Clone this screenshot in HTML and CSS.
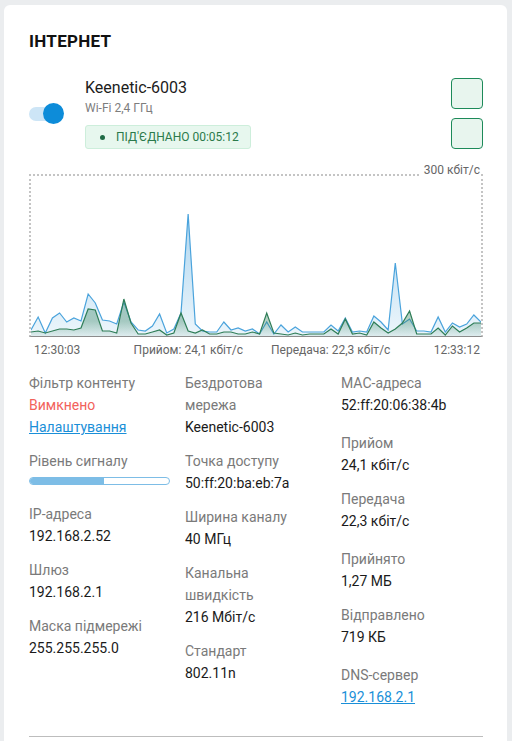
FILE: index.html
```html
<!DOCTYPE html>
<html lang="uk">
<head>
    <meta charset="UTF-8">
    <meta name="viewport" content="width=device-width, initial-scale=1.0">
    <title>Інтернет</title>
    <link rel="stylesheet" href="styles.css">
</head>
<body>
    <div class="card">
        <h2 class="card-title">Інтернет</h2>

        <!-- Connection row -->
        <div class="connection">
            <div class="toggle">
                <span class="toggle-track"></span>
                <span class="toggle-knob"></span>
            </div>
            <div class="connection-info">
                <div class="connection-name">Keenetic-6003</div>
                <div class="connection-band">Wi-Fi 2,4 ГГц</div>
                <div class="status-badge">
                    <span class="status-dot"></span>
                    ПІД'ЄДНАНО 00:05:12
                </div>
            </div>
            <div class="connection-actions">
                <button class="action-button"></button>
                <button class="action-button"></button>
            </div>
        </div>

        <!-- Traffic chart -->
        <div class="chart">
            <span class="chart-max">300 кбіт/с</span>
            <svg class="chart-svg" viewBox="0 0 63 160" preserveAspectRatio="none">
                <defs>
                    <linearGradient id="rxFill" x1="0" y1="0" x2="0" y2="1">
                        <stop offset="0" stop-color="#4aa3dc" stop-opacity="0.45"/>
                        <stop offset="1" stop-color="#4aa3dc" stop-opacity="0.1"/>
                    </linearGradient>
                    <linearGradient id="txFill" x1="0" y1="0" x2="0" y2="1">
                        <stop offset="0.6" stop-color="#2e7d57" stop-opacity="0.35"/>
                        <stop offset="1" stop-color="#2e7d57" stop-opacity="0.08"/>
                    </linearGradient>
                </defs>
                <polygon id="rxArea" fill="url(#rxFill)"/>
                <polyline id="rxLine" fill="none" stroke="#4aa3dc" stroke-width="1.2" vector-effect="non-scaling-stroke"/>
                <polygon id="txArea" fill="url(#txFill)"/>
                <polyline id="txLine" fill="none" stroke="#2e7d57" stroke-width="1.2" vector-effect="non-scaling-stroke"/>
            </svg>
        </div>
        <div class="chart-legend">
            <span>12:30:03</span>
            <div class="chart-legend-middle">
                <span>Прийом: 24,1 кбіт/с</span>
                <span>Передача: 22,3 кбіт/с</span>
            </div>
            <span>12:33:12</span>
        </div>

        <!-- Details -->
        <div class="details">
            <div class="details-col">
                <div class="item">
                    <div class="label">Фільтр контенту</div>
                    <div class="value value-off">Вимкнено</div>
                    <a class="value link" href="#">Налаштування</a>
                </div>
                <div class="item">
                    <div class="label">Рівень сигналу</div>
                    <div class="signal"><div class="signal-fill" style="width: 53%"></div></div>
                </div>
                <div class="item">
                    <div class="label">IP-адреса</div>
                    <div class="value">192.168.2.52</div>
                </div>
                <div class="item">
                    <div class="label">Шлюз</div>
                    <div class="value">192.168.2.1</div>
                </div>
                <div class="item">
                    <div class="label">Маска підмережі</div>
                    <div class="value">255.255.255.0</div>
                </div>
            </div>

            <div class="details-col">
                <div class="item">
                    <div class="label">Бездротова<br>мережа</div>
                    <div class="value">Keenetic-6003</div>
                </div>
                <div class="item">
                    <div class="label">Точка доступу</div>
                    <div class="value">50:ff:20:ba:eb:7a</div>
                </div>
                <div class="item">
                    <div class="label">Ширина каналу</div>
                    <div class="value">40 МГц</div>
                </div>
                <div class="item">
                    <div class="label">Канальна<br>швидкість</div>
                    <div class="value">216 Мбіт/с</div>
                </div>
                <div class="item">
                    <div class="label">Стандарт</div>
                    <div class="value">802.11n</div>
                </div>
            </div>

            <div class="details-col">
                <div class="group">
                    <div class="item">
                        <div class="label">MAC-адреса</div>
                        <div class="value">52:ff:20:06:38:4b</div>
                    </div>
                </div>
                <div class="group">
                    <div class="item">
                        <div class="label">Прийом</div>
                        <div class="value">24,1 кбіт/с</div>
                    </div>
                    <div class="item">
                        <div class="label">Передача</div>
                        <div class="value">22,3 кбіт/с</div>
                    </div>
                </div>
                <div class="group">
                    <div class="item">
                        <div class="label">Прийнято</div>
                        <div class="value">1,27 МБ</div>
                    </div>
                    <div class="item">
                        <div class="label">Відправлено</div>
                        <div class="value">719 КБ</div>
                    </div>
                </div>
                <div class="group">
                    <div class="item">
                        <div class="label">DNS-сервер</div>
                        <a class="value link" href="#">192.168.2.1</a>
                    </div>
                </div>
            </div>
        </div>

        <hr class="divider">
    </div>

    <script>
        // Samples: offset from the top of the plot, 160 = 0 кбіт/с, 0 = 300 кбіт/с
        const rx = [154,141,157,142,137,146,142,145,118,127,144,145,148,126,146,154,155,150,138,157,
                    153,137,38,148,155,156,156,146,154,152,155,153,158,146,158,149,156,151,156,156,
                    156,156,149,155,142,156,155,156,140,146,154,87,148,143,155,155,156,141,156,147,
                    151,148,139,146];
        const tx = [156,155,157,155,153,153,154,152,133,134,155,155,157,123,147,158,158,156,154,159,
                    157,137,155,157,154,158,158,156,156,158,158,156,158,137,157,158,159,157,159,158,
                    158,158,153,158,143,158,157,159,146,152,157,153,147,135,158,158,158,152,159,150,
                    156,152,147,147];

        function plot(data, lineId, areaId) {
            const pts = data.map((y, i) => `${i},${y}`).join(' ');
            document.getElementById(lineId).setAttribute('points', pts);
            document.getElementById(areaId).setAttribute('points', `0,160 ${pts} ${data.length - 1},160`);
        }

        plot(rx, 'rxLine', 'rxArea');
        plot(tx, 'txLine', 'txArea');
    </script>
</body>
</html>
```

FILE: styles.css
```css
* {
    margin: 0;
    padding: 0;
    box-sizing: border-box;
}

body {
    background-color: #ebedef;
    margin: 5px 5px 0 4px;
    font-family: Roboto, "Liberation Sans", sans-serif;
    color: #1f1f1f;
}

.card {
    background-color: white;
    border-radius: 6px 6px 0 0;
    padding: 26px 24px 30px 25px;
}

.card-title {
    font-size: 17px;
    font-weight: 700;
    line-height: 20px;
    letter-spacing: 0.3px;
    text-transform: uppercase;
    color: #111;
    margin-bottom: 27px;
}

/* Connection row */
.connection {
    display: flex;
    align-items: center;
}

.toggle {
    position: relative;
    width: 35px;
    height: 21px;
    margin-right: 21px;
    display: flex;
    align-items: center;
}

.toggle-track {
    width: 30px;
    height: 14px;
    border-radius: 7px;
    background-color: #cde5f6;
}

.toggle-knob {
    position: absolute;
    right: 0;
    top: 0;
    width: 21px;
    height: 21px;
    border-radius: 50%;
    background-color: #0d8cd9;
}

.connection-info {
    flex: 1;
}

.connection-name {
    font-size: 16px;
    line-height: 20px;
    color: #1c1c1c;
}

.connection-band {
    font-size: 12px;
    line-height: 16px;
    margin-top: 2px;
    color: #7d7d7d;
}

.status-badge {
    display: inline-flex;
    align-items: center;
    gap: 11px;
    height: 24px;
    margin-top: 9px;
    padding: 0 11px 0 14px;
    border: 1px solid #cdeedb;
    border-radius: 3px;
    background-color: #e7f7ee;
    font-size: 12px;
    color: #2b7a4b;
}

.status-dot {
    width: 5px;
    height: 5px;
    border-radius: 50%;
    background-color: #1f6b45;
}

.connection-actions {
    display: flex;
    flex-direction: column;
    gap: 9px;
}

.action-button {
    width: 32px;
    height: 31px;
    border: 1px solid #1d8a59;
    border-radius: 4px;
    background-color: #e8f5ee;
    cursor: pointer;
}

/* Traffic chart */
.chart {
    position: relative;
    height: 163px;
    margin-top: 25px;
    border: 2px dotted #c4c4c4;
    border-bottom: 1px solid #8c8c8c;
}

.chart-max {
    position: absolute;
    top: -13px;
    right: 1px;
    padding-left: 3px;
    background-color: white;
    font-size: 12px;
    line-height: 14px;
    color: #666;
}

.chart-svg {
    display: block;
    width: 100%;
    height: 100%;
}

.chart-legend {
    display: flex;
    margin-top: 5px;
    padding: 0 3px 0 5px;
    font-size: 12px;
    line-height: 16px;
    color: #666;
}

.chart-legend-middle {
    flex: 1;
    display: flex;
    justify-content: center;
    gap: 28px;
    padding-left: 10px;
}

/* Details */
.details {
    display: grid;
    grid-template-columns: 156px 156px 1fr;
    margin-top: 14px;
    font-size: 14px;
    line-height: 22px;
}

.details-col .item {
    padding-bottom: 12px;
}

.group {
    padding-bottom: 4px;
}

.label {
    color: #7a7a7a;
}

.value {
    display: block;
    color: #1a1a1a;
}

.value-off {
    color: #f2625b;
}

.link {
    color: #1a8fd8;
    text-decoration: underline;
}

.signal {
    width: 141px;
    height: 8px;
    margin: 5px 0 6px;
    border: 1px solid #7dbde6;
    border-radius: 4px;
    overflow: hidden;
}

.signal-fill {
    height: 100%;
    background-color: #7dbde6;
}

.divider {
    border: none;
    border-top: 1px solid #bdbdbd;
    margin-top: 12px;
}
```
